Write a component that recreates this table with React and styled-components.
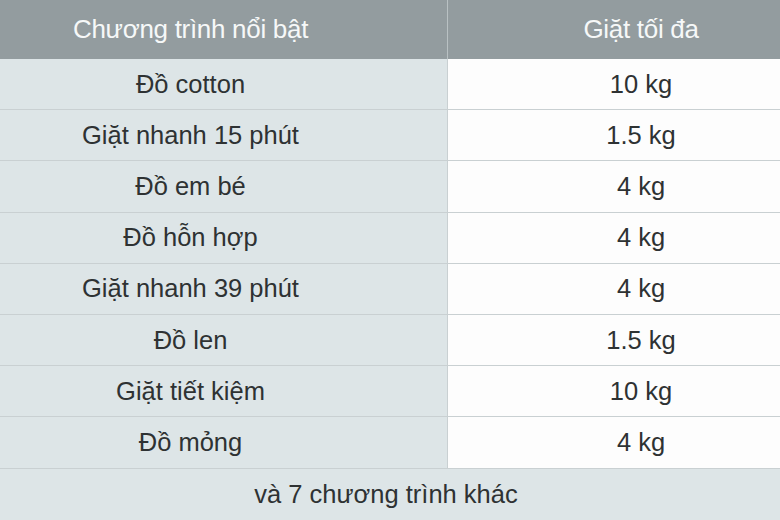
import React from 'react';
import styled, { createGlobalStyle } from 'styled-components';

const GlobalStyle = createGlobalStyle`
  html, body {
    margin: 0;
    padding: 0;
    background: #ffffff;
  }
  body {
    font-family: "Liberation Sans", Arial, sans-serif;
  }
`;

const Table = styled.div`
  width: 780px;
  height: 520px;
  display: grid;
  grid-template-columns: 447px 1fr;
  grid-template-rows: 59px repeat(8, 51.2px) 1fr;
  overflow: hidden;
`;

// the table is cropped on both sides, so the text sits off-centre in each column
const HeadCell = styled.div`
  display: flex;
  align-items: center;
  justify-content: center;
  padding: ${p => (p.$right ? '0 0 0 54px' : '0 66px 0 0')};
  background: #939c9f;
  color: #f6f8f8;
  font-size: 26px;
  letter-spacing: -0.3px;
  border-left: ${p => (p.$right ? '1px solid #b9c1c3' : 'none')};
`;

const Cell = styled.div`
  display: flex;
  align-items: center;
  justify-content: center;
  padding: ${p => (p.$right ? '0 0 0 54px' : '0 66px 0 0')};
  background: ${p => (p.$right ? '#fdfdfd' : '#dde5e7')};
  color: #2e3233;
  font-size: 25.5px;
  border-bottom: 1px solid #c9d0d2;
  border-left: ${p => (p.$right ? '1px solid #c9d0d2' : 'none')};
`;

const FootCell = styled.div`
  grid-column: 1 / -1;
  display: flex;
  align-items: center;
  justify-content: center;
  padding-right: 8px;
  background: #dde5e7;
  color: #2e3233;
  font-size: 25.5px;
`;

const programs = [
  ['Đồ cotton', '10 kg'],
  ['Giặt nhanh 15 phút', '1.5 kg'],
  ['Đồ em bé', '4 kg'],
  ['Đồ hỗn hợp', '4 kg'],
  ['Giặt nhanh 39 phút', '4 kg'],
  ['Đồ len', '1.5 kg'],
  ['Giặt tiết kiệm', '10 kg'],
  ['Đồ mỏng', '4 kg'],
];

const App = () => (
  <>
    <GlobalStyle />
    <Table>
      <HeadCell>Chương trình nổi bật</HeadCell>
      <HeadCell $right>Giặt tối đa</HeadCell>
      {programs.map(([name, load]) => (
        <React.Fragment key={name}>
          <Cell>{name}</Cell>
          <Cell $right>{load}</Cell>
        </React.Fragment>
      ))}
      <FootCell>và 7 chương trình khác</FootCell>
    </Table>
  </>
);

export default App;
